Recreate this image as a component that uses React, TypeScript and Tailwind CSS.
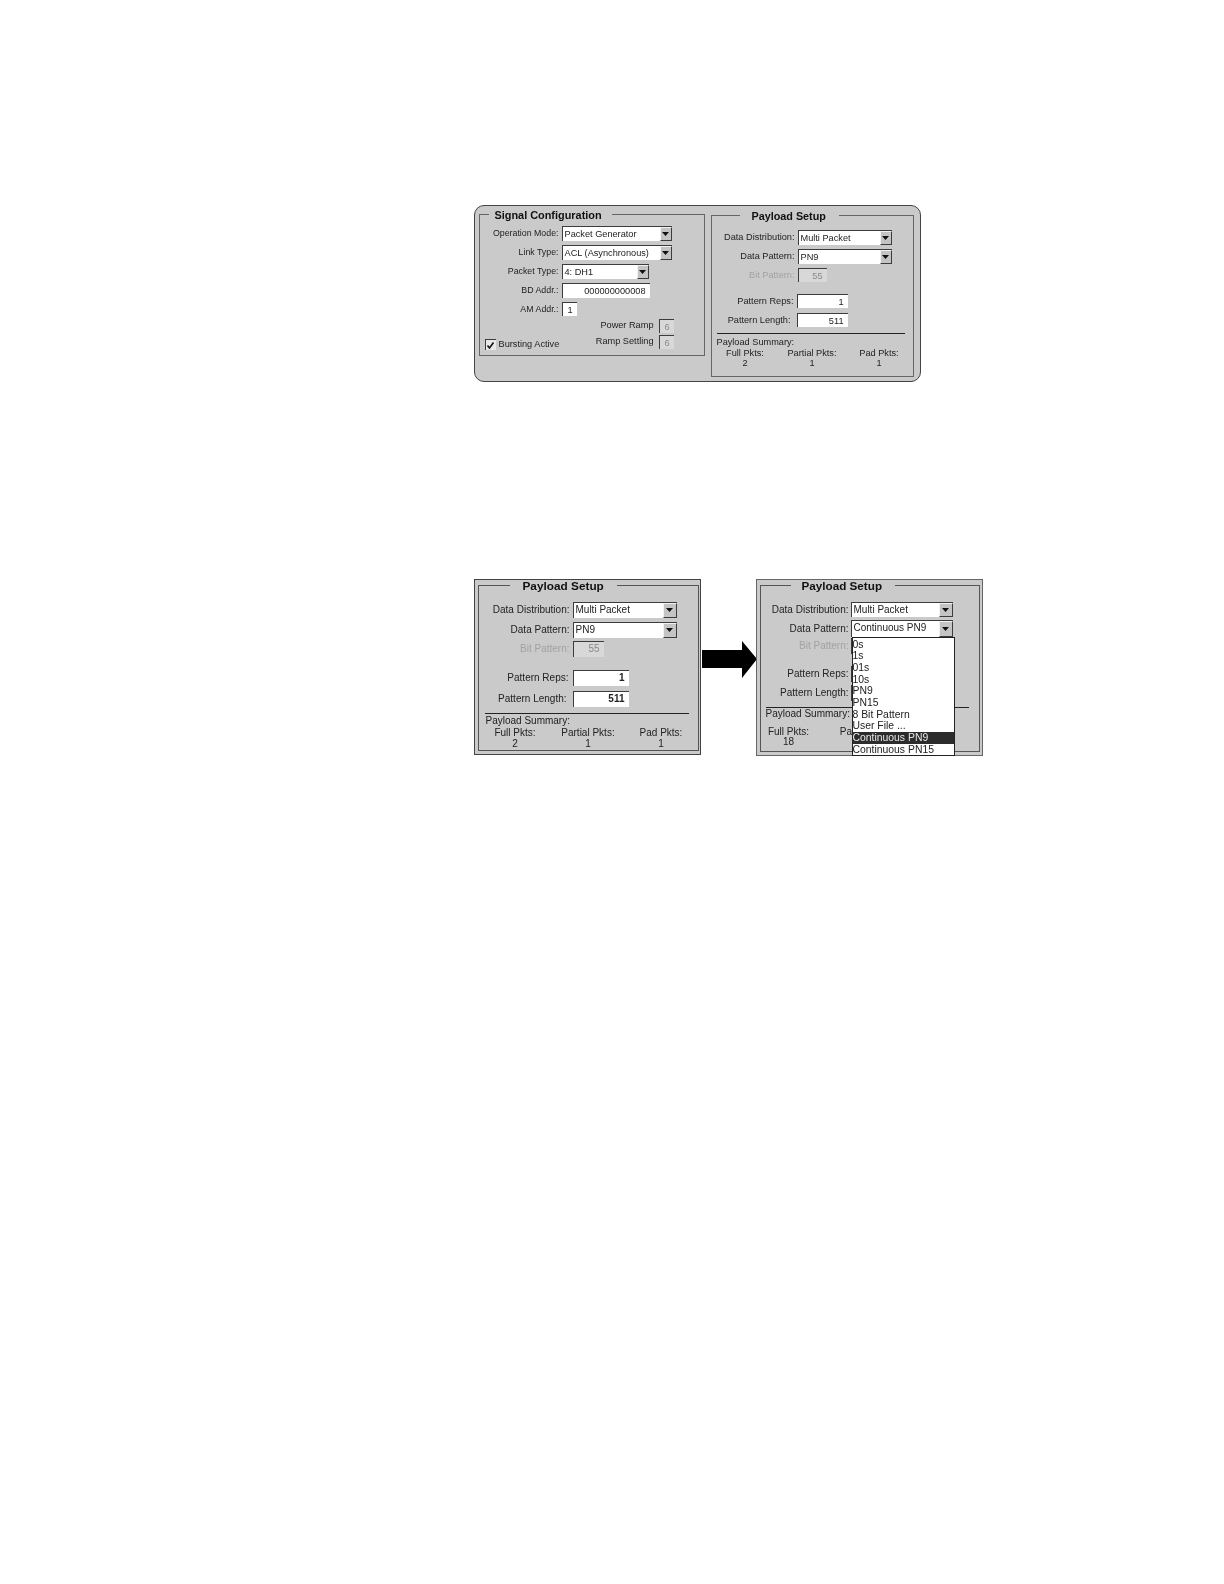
import type { ReactNode } from "react";

function Arrow() {
  return (
    <svg width="7" height="4" viewBox="0 0 7 4" aria-hidden="true">
      <path d="M0 0H7L3.5 4Z" fill="#111" />
    </svg>
  );
}

function Select({ value, className, big, children }: { value: string; className: string; big?: boolean; children?: ReactNode }) {
  return (
    <div className={`relative flex items-stretch border-t border-l border-[#3c3c3c] bg-white ${className}`}>
      <span className="flex-1 overflow-hidden whitespace-nowrap pl-[2px] leading-[14px]">{value}</span>
      <span className={`flex items-center justify-center border border-t-[#f2f2f2] border-l-[#f2f2f2] border-r-[#3c3c3c] border-b-[#3c3c3c] bg-[#c4c4c4] ${big ? "w-[14px]" : "w-[12px]"}`}>
        <Arrow />
      </span>
      {children}
    </div>
  );
}

function Input({ value, className, disabled, bold }: { value: string; className: string; disabled?: boolean; bold?: boolean }) {
  return (
    <div
      className={`border-t border-l border-[#3c3c3c] pr-[4px] text-right leading-[14px] ${
        disabled ? "bg-[#d8d8d8] text-[#8a8a8a]" : "bg-white"
      } ${bold ? "font-bold" : ""} ${className}`}
    >
      {value}
    </div>
  );
}

function Row({ label, className, labelClass, disabled, children }: { label: string; className: string; labelClass: string; disabled?: boolean; children: ReactNode }) {
  return (
    <div className={`flex items-center ${className}`}>
      <span className={`shrink-0 whitespace-nowrap text-right ${disabled ? "text-[#a2a2a2]" : ""} ${labelClass}`}>{label}</span>
      {children}
    </div>
  );
}

function Summary({ full, lineClass, titleClass, gridClass }: { full: string; lineClass: string; titleClass: string; gridClass: string }) {
  return (
    <>
      <div className={`h-px bg-[#222] ${lineClass}`} />
      <div className={titleClass}>Payload Summary:</div>
      <div className={`grid text-center ${gridClass}`}>
        <span>Full Pkts:</span>
        <span>Partial Pkts:</span>
        <span>Pad Pkts:</span>
        <span>{full}</span>
        <span>1</span>
        <span>1</span>
      </div>
    </>
  );
}

const menuItems = ["0s", "1s", "01s", "10s", "PN9", "PN15", "8 Bit Pattern", "User File ...", "Continuous PN9", "Continuous PN15"];

export default function App() {
  const topLabel = "w-[79px] mr-[3px] mt-[2px] text-[8.8px]";
  const topRight = "w-[83px] mr-[3px] mt-[2px]";
  const lowLeft = "w-[91px] mr-[3px]";
  const lowRight = "w-[88px] mr-[2px]";

  return (
    <div className="min-h-[1584px] bg-white pt-[205px] pl-[474px] font-['Liberation_Sans',Arial,sans-serif] text-[#222] blur-[0.35px]">
      {/* Signal configuration panel */}
      <div className="flex h-[177px] w-[447px] gap-[6px] rounded-[10px] border-[1.5px] border-[#444] bg-[#cacaca] pt-[1.5px] pl-[3.5px] text-[9.2px]">
        <fieldset className="h-[148px] w-[226px] border border-[#666]">
          <legend className="ml-[9px] h-[14px] pr-[10px] pl-[6px] text-[10.9px] leading-[14px] font-bold text-[#111]">Signal Configuration</legend>
          <div className="flex flex-col gap-[4px] pt-[4px]">
            <Row label="Operation Mode:" className="h-[15px]" labelClass={topLabel}><Select value="Packet Generator" className="h-[15px] w-[110px]" /></Row>
            <Row label="Link Type:" className="h-[15px]" labelClass={topLabel}><Select value="ACL (Asynchronous)" className="h-[15px] w-[110px]" /></Row>
            <Row label="Packet Type:" className="h-[15px]" labelClass={topLabel}><Select value="4: DH1" className="h-[15px] w-[87px]" /></Row>
            <Row label="BD Addr.:" className="h-[15px]" labelClass={topLabel}><Input value="000000000008" className="h-[15px] w-[88px]" /></Row>
            <Row label="AM Addr.:" className="h-[14px]" labelClass={topLabel}><Input value="1" className="h-[14px] w-[15px]" /></Row>
          </div>
          <div className="flex items-end justify-between pt-[3px] pr-[30px] pl-[5px]">
            <label className="-mb-[3px] flex items-center gap-[3px]">
              <span className="flex size-[11px] items-center justify-center border-t border-l border-[#3c3c3c] bg-[#e8e8e8]">
                <svg width="9" height="9" viewBox="0 0 9 9" aria-hidden="true"><path d="M1.5 4.5L3.5 7L7.5 1.5" fill="none" stroke="#111" strokeWidth="1.6" /></svg>
              </span>
              Bursting Active
            </label>
            <div className="flex flex-col items-end gap-[2px]">
              <div className="flex items-center gap-[5px]">Power Ramp<Input value="6" disabled className="h-[14px] w-[15px]" /></div>
              <div className="flex items-center gap-[5px]">Ramp Settling<Input value="6" disabled className="h-[14px] w-[15px]" /></div>
            </div>
          </div>
        </fieldset>

        <fieldset className="mt-px h-[168px] w-[201px] border border-[#666]">
          <legend className="ml-[28px] h-[14px] pr-[13px] pl-[12px] text-[10.8px] leading-[14px] font-bold text-[#111]">Payload Setup</legend>
          <Row label="Data Distribution:" className="mt-[7px] h-[15px]" labelClass={topRight}><Select value="Multi Packet" className="h-[15px] w-[94px]" /></Row>
          <Row label="Data Pattern:" className="mt-[4px] h-[15px]" labelClass={topRight}><Select value="PN9" className="h-[15px] w-[94px]" /></Row>
          <Row label="Bit Pattern:" disabled className="mt-[4px] h-[14px]" labelClass={topRight}><Input value="55" disabled className="h-[14px] w-[29px]" /></Row>
          <Row label="Pattern Reps:" className="mt-[12px] h-[14px]" labelClass="w-[82px] mr-[3px] mt-[2px]"><Input value="1" className="h-[14px] w-[51px]" /></Row>
          <Row label="Pattern Length:" className="mt-[5px] h-[14px]" labelClass="w-[79px] mr-[6px] mt-[2px]"><Input value="511" className="h-[14px] w-[51px]" /></Row>
          <Summary
            full="2"
            lineClass="ml-[5px] mr-[8px] mt-[6px]"
            titleClass="mt-[3px] ml-[5px] leading-[11px]"
            gridClass="grid-cols-[repeat(3,67px)] justify-center leading-[10px]"
          />
        </fieldset>
      </div>

      {/* Before and after dropdown */}
      <div className="mt-[197px] flex items-start text-[10px]">
        <div className="h-[176px] w-[227px] border-[1.5px] border-[#444] bg-[#cacaca] px-[2.5px] pt-[0.5px]">
          <fieldset className="h-[170px] border border-[#555]">
            <legend className="ml-[31px] h-[10px] px-[13px] text-[11.8px] leading-[10px] font-bold text-[#111]">Payload Setup</legend>
            <Row label="Data Distribution:" className="mt-[11px] h-[16px]" labelClass={lowLeft}><Select big value="Multi Packet" className="h-[16px] w-[104px]" /></Row>
            <Row label="Data Pattern:" className="mt-[4px] h-[16px]" labelClass={lowLeft}><Select big value="PN9" className="h-[16px] w-[104px]" /></Row>
            <Row label="Bit Pattern:" disabled className="mt-[3px] h-[16px]" labelClass={lowLeft}><Input value="55" disabled className="h-[16px] w-[31px]" /></Row>
            <Row label="Pattern Reps:" className="mt-[13px] h-[16px]" labelClass="w-[90px] mr-[4px]"><Input bold value="1" className="h-[16px] w-[56px]" /></Row>
            <Row label="Pattern Length:" className="mt-[5px] h-[16px]" labelClass="w-[88px] mr-[6px]"><Input bold value="511" className="h-[16px] w-[56px]" /></Row>
            <Summary
              full="2"
              lineClass="ml-[6px] mr-[9px] mt-[6px]"
              titleClass="mt-[1px] ml-[7px] leading-[11px]"
              gridClass="mt-px grid-cols-[repeat(3,73px)] justify-center leading-[11px]"
            />
          </fieldset>
        </div>

        <svg className="mt-[62px] ml-px shrink-0" width="55" height="37" viewBox="0 0 55 37" aria-hidden="true">
          <path d="M0 9H40V0L55 18L40 37V27H0Z" fill="#000" />
        </svg>

        <div className="-ml-px h-[177px] w-[227px] border-[1.5px] border-[#666] bg-[#cacaca] px-[2.5px] pt-[0.5px]">
          <fieldset className="h-[171px] border border-[#555]">
            <legend className="ml-[30px] h-[10px] pr-[13px] pl-[11px] text-[11.7px] leading-[10px] font-bold text-[#111]">Payload Setup</legend>
            <Row label="Data Distribution:" className="mt-[11px] h-[15px]" labelClass={lowRight}><Select big value="Multi Packet" className="h-[15px] w-[102px]" /></Row>
            <Row label="Data Pattern:" className="mt-[3px] h-[17px]" labelClass={lowRight}>
              <Select big value="Continuous PN9" className="h-[17px] w-[102px]">
                <ul className="absolute top-full left-0 z-10 h-[119px] w-[103px] border border-[#222] bg-white pt-px text-[10.4px] leading-[11.7px]">
                  {menuItems.map((item) => (
                    <li key={item} className={`whitespace-nowrap ${item === "Continuous PN9" ? "bg-[#2c2c2c] text-[#e8e8e8]" : ""}`}>
                      {item}
                    </li>
                  ))}
                </ul>
              </Select>
            </Row>
            <Row label="Bit Pattern:" disabled className="mt-px h-[16px]" labelClass={lowRight}><Input value="55" disabled className="h-[16px] w-[31px]" /></Row>
            <Row label="Pattern Reps:" className="mt-[12px] h-[16px]" labelClass={lowRight}><Input bold value="1" className="h-[16px] w-[56px]" /></Row>
            <Row label="Pattern Length:" className="mt-[3px] h-[16px]" labelClass={lowRight}><Input bold value="511" className="h-[16px] w-[56px]" /></Row>
            <Summary
              full="18"
              lineClass="ml-[5px] mr-[10px] mt-[6px]"
              titleClass="ml-[5px] leading-[11px]"
              gridClass="-ml-[11px] mt-[8px] grid-cols-[78px_78px_58px] leading-[10px]"
            />
          </fieldset>
        </div>
      </div>
    </div>
  );
}
